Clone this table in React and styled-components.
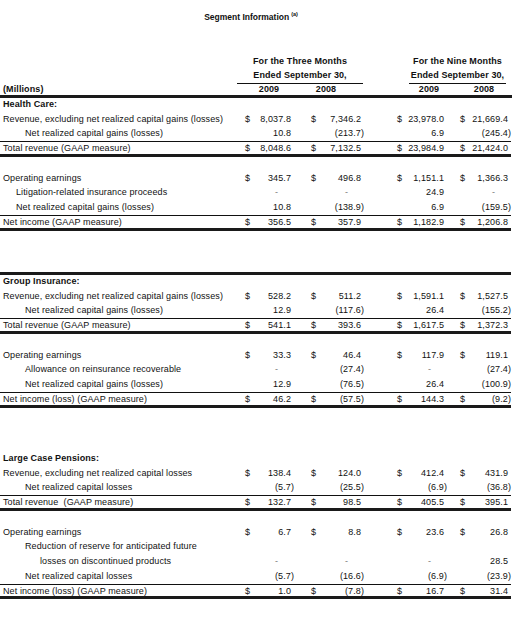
import React from "react";
import styled, { createGlobalStyle } from "styled-components";

const GlobalStyle = createGlobalStyle`
  html, body { margin: 0; padding: 0; background: #fff; }
  body {
    font-family: "Liberation Sans", Arial, sans-serif;
    color: #111;
    font-size: 9px;
    letter-spacing: 0.1px;
  }
`;

const Page = styled.div`
  width: 514px;
  height: 627px;
  overflow: hidden;
`;

const Title = styled.div`
  width: 502px;
  height: 34px;
  line-height: 34px;
  margin-bottom: 19.6px;
  text-align: center;
  font-weight: bold;
  font-size: 8.5px;
  letter-spacing: 0;
  sup {
    font-size: 5.5px;
    vertical-align: 4px;
    line-height: 0;
    margin-left: 2px;
  }
`;

const ROW_H = "14.76px";

const GroupRow = styled.div`
  display: grid;
  grid-template-columns: 237px 126px 40px 109px;
  height: ${ROW_H};
  line-height: ${ROW_H};
  font-weight: bold;
`;

const GroupCell = styled.div`
  grid-column: ${(p) => p.$col};
  text-align: center;
  box-sizing: border-box;
  border-bottom: ${(p) => (p.$underline ? "1px solid #111" : "none")};
  margin: ${(p) => p.$inset || "0"};
`;

const YearRow = styled.div`
  display: grid;
  grid-template-columns: 240px 58px 56px 48px 54px 56px;
  height: ${ROW_H};
  line-height: 12px;
  box-sizing: border-box;
  border-bottom: 3px solid #1a1a1a;
  font-weight: bold;
  width: 512px;
`;

const YearCell = styled.div`
  grid-column: ${(p) => p.$col};
  text-align: ${(p) => (p.$left ? "left" : "center")};
  padding-left: ${(p) => (p.$left ? "3px" : "0")};
`;

const rules = {
  thin: "1.5px solid #111",
  thick: "3px solid #1a1a1a",
};

const Row = styled.div`
  display: grid;
  grid-template-columns: 240px 12px 42px 24px 46px 40px 43px 20px 44px;
  width: 511px;
  height: ${ROW_H};
  line-height: ${(p) => (p.$rule === "thick" ? "12px" : "13.5px")};
  box-sizing: border-box;
  border-bottom: ${(p) => (p.$rule ? rules[p.$rule] : "none")};
  white-space: pre;
`;

const Label = styled.div`
  padding-left: ${(p) => 3 + (p.$indent || 0)}px;
  font-weight: ${(p) => (p.$bold ? "bold" : "normal")};
  overflow: visible;
`;

const Dollar = styled.div`
  text-align: right;
  padding-right: 2px;
`;

const Value = styled.div`
  text-align: right;
  padding-right: ${(p) => (p.$dash ? "16px" : p.$paren ? "0" : "3px")};
  color: ${(p) => (p.$dash ? "#777" : "#111")};
`;

const sections = [
  {
    title: "Health Care:",
    rows: [
      { label: "Revenue, excluding net realized capital gains (losses)", usd: true, v: ["8,037.8", "7,346.2", "23,978.0", "21,669.4"] },
      { label: "Net realized capital gains (losses)", indent: 22, v: ["10.8", "(213.7)", "6.9", "(245.4)"], rule: "thin" },
      { label: "Total revenue (GAAP measure)", usd: true, v: ["8,048.6", "7,132.5", "23,984.9", "21,424.0"], rule: "thick" },
      {},
      { label: "Operating earnings", usd: true, v: ["345.7", "496.8", "1,151.1", "1,366.3"] },
      { label: "Litigation-related insurance proceeds", indent: 13, v: ["-", "-", "24.9", "-"] },
      { label: "Net realized capital gains (losses)", indent: 13, v: ["10.8", "(138.9)", "6.9", "(159.5)"], rule: "thin" },
      { label: "Net income (GAAP measure)", usd: true, v: ["356.5", "357.9", "1,182.9", "1,206.8"], rule: "thick" },
      {},
      {},
      { rule: "thick" },
    ],
  },
  {
    title: "Group Insurance:",
    rows: [
      { label: "Revenue, excluding net realized capital gains (losses)", usd: true, v: ["528.2", "511.2", "1,591.1", "1,527.5"] },
      { label: "Net realized capital gains (losses)", indent: 22, v: ["12.9", "(117.6)", "26.4", "(155.2)"], rule: "thin" },
      { label: "Total revenue (GAAP measure)", usd: true, v: ["541.1", "393.6", "1,617.5", "1,372.3"], rule: "thick" },
      {},
      { label: "Operating earnings", usd: true, v: ["33.3", "46.4", "117.9", "119.1"] },
      { label: "Allowance on reinsurance recoverable", indent: 22, v: ["-", "(27.4)", "-", "(27.4)"] },
      { label: "Net realized capital gains (losses)", indent: 22, v: ["12.9", "(76.5)", "26.4", "(100.9)"], rule: "thin" },
      { label: "Net income (loss) (GAAP measure)", usd: true, v: ["46.2", "(57.5)", "144.3", "(9.2)"], rule: "thick" },
      {},
      {},
      {},
    ],
  },
  {
    title: "Large Case Pensions:",
    rows: [
      { label: "Revenue, excluding net realized capital losses", usd: true, v: ["138.4", "124.0", "412.4", "431.9"] },
      { label: "Net realized capital losses", indent: 22, v: ["(5.7)", "(25.5)", "(6.9)", "(36.8)"], rule: "thin" },
      { label: "Total revenue  (GAAP measure)", usd: true, v: ["132.7", "98.5", "405.5", "395.1"], rule: "thick" },
      {},
      { label: "Operating earnings", usd: true, v: ["6.7", "8.8", "23.6", "26.8"] },
      { label: "Reduction of reserve for anticipated future", indent: 22 },
      { label: "losses on discontinued products", indent: 37, v: ["-", "-", "-", "28.5"] },
      { label: "Net realized capital losses", indent: 22, v: ["(5.7)", "(16.6)", "(6.9)", "(23.9)"], rule: "thin" },
      { label: "Net income (loss) (GAAP measure)", usd: true, v: ["1.0", "(7.8)", "16.7", "31.4"], rule: "thick" },
    ],
  },
];

function DataRow({ row }) {
  const v = row.v || ["", "", "", ""];
  const cells = [];
  v.forEach((val, i) => {
    cells.push(<Dollar key={"d" + i}>{row.usd ? "$" : ""}</Dollar>);
    cells.push(
      <Value key={"v" + i} $dash={val === "-"} $paren={val.endsWith(")")}>
        {val}
      </Value>
    );
  });
  return (
    <Row $rule={row.rule}>
      <Label $indent={row.indent}>{row.label || ""}</Label>
      {cells}
    </Row>
  );
}

export default function App() {
  return (
    <Page>
      <GlobalStyle />
      <Title>
        Segment Information<sup>(a)</sup>
      </Title>
      <GroupRow>
        <GroupCell $col={2}>For the Three Months</GroupCell>
        <GroupCell $col={4}>For the Nine Months</GroupCell>
      </GroupRow>
      <GroupRow>
        <GroupCell $col={2} $underline>Ended September 30,</GroupCell>
        <GroupCell $col={4} $underline $inset="0 6px">Ended September 30,</GroupCell>
      </GroupRow>
      <YearRow>
        <YearCell $col={1} $left>(Millions)</YearCell>
        <YearCell $col={2}>2009</YearCell>
        <YearCell $col={3}>2008</YearCell>
        <YearCell $col={5}>2009</YearCell>
        <YearCell $col={6}>2008</YearCell>
      </YearRow>
      {sections.map((s) => (
        <React.Fragment key={s.title}>
          <Row>
            <Label $bold>{s.title}</Label>
          </Row>
          {s.rows.map((r, i) => (
            <DataRow key={i} row={r} />
          ))}
        </React.Fragment>
      ))}
    </Page>
  );
}
